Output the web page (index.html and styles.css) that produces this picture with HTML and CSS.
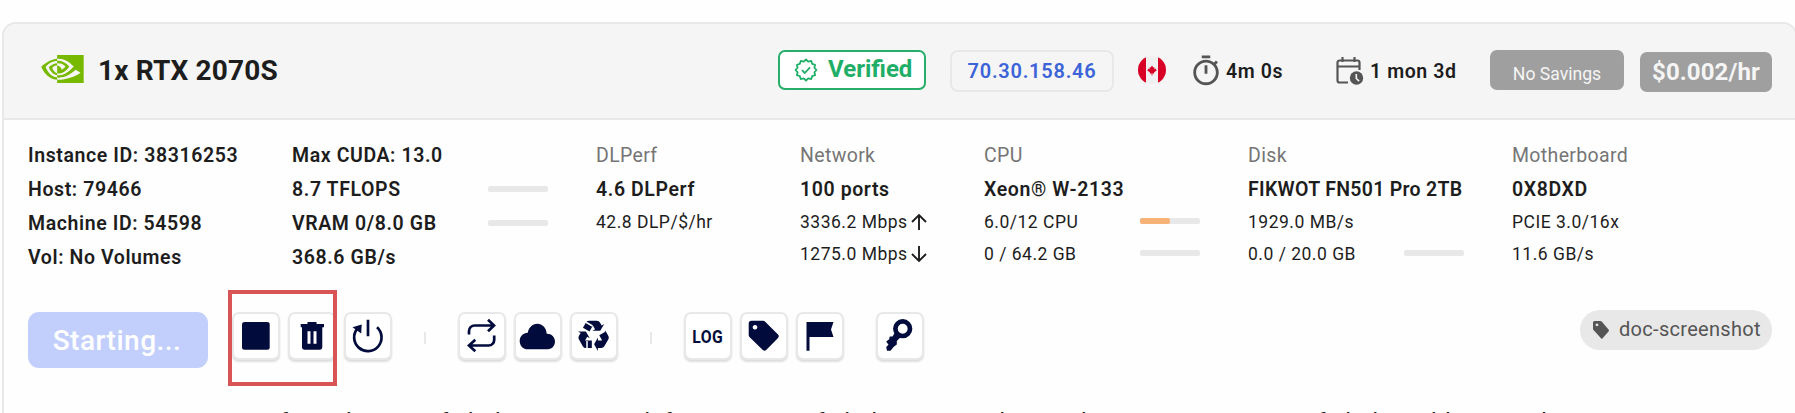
FILE: index.html
```html
<!DOCTYPE html>
<html lang="en">
<head>
  <meta charset="UTF-8">
  <meta name="viewport" content="width=device-width, initial-scale=1.0">
  <title>Instances</title>
  <link rel="stylesheet" href="styles.css">
</head>
<body>
<section class="card">
  <header class="card-head">
    <svg class="nvidia" viewBox="0 4.06 24 15.87"><path d="M8.948 8.798v-1.43a6.7 6.7 0 0 1 .424-.018c3.922-.124 6.493 3.374 6.493 3.374s-2.774 3.851-5.75 3.851c-.398 0-.787-.062-1.158-.185v-4.346c1.528.185 1.837.857 2.747 2.385l2.04-1.714s-1.492-1.952-4-1.952a6.016 6.016 0 0 0-.796.035m0-4.735v2.138l.424-.027c5.45-.185 9.01 4.47 9.01 4.47s-4.08 4.964-8.33 4.964c-.37 0-.733-.035-1.095-.097v1.325c.3.035.61.062.91.062 3.957 0 6.82-2.023 9.593-4.408.459.371 2.34 1.263 2.73 1.652-2.633 2.208-8.772 3.984-12.253 3.984-.335 0-.653-.018-.971-.053v1.864H24V4.063zm0 10.326v1.131c-3.657-.654-4.673-4.46-4.673-4.46s1.758-1.944 4.673-2.262v1.237H8.94c-1.528-.186-2.73 1.245-2.73 1.245s.68 2.412 2.739 3.11M2.456 10.9s2.164-3.197 6.5-3.533V6.201C4.153 6.59 0 10.653 0 10.653s2.35 6.802 8.948 7.42v-1.237c-4.84-.6-6.492-5.936-6.492-5.936z"/></svg>
    <h1 class="title">1x RTX 2070S</h1>
    <div class="verified">
      <svg viewBox="0 0 24 24"><path d="M22.5 12L20.4 14.25L21.1 17.25L18.15 18.15L17.25 21.1L14.25 20.4L12 22.5L9.75 20.4L6.75 21.1L5.85 18.15L2.9 17.25L3.6 14.25L1.5 12L3.6 9.75L2.9 6.75L5.85 5.85L6.75 2.9L9.75 3.6L12 1.5L14.25 3.6L17.25 2.9L18.15 5.85L21.1 6.75L20.4 9.75Z"/><path d="M8 12.2l2.8 2.8 5.2-5.6"/></svg>
      <span>Verified</span>
    </div>
    <a class="ip">70.30.158.46</a>
    <svg class="flag" viewBox="0 0 28 28">
      <clipPath id="round"><circle cx="14" cy="14" r="14"/></clipPath>
      <g clip-path="url(#round)">
        <path fill="#f0f0f0" d="M0 0h28v28H0z"/>
        <path fill="#d80027" d="M0 0h8v28H0zM20 0h8v28h-8z"/>
        <path fill="#d80027" d="M14 9.6l1.3 2 1.3-.4-.4 2 1.9-.7 0 1.3.8.5-2.9 2.3.2 1h-1.8v1.9h-.8v-1.9h-1.8l.2-1-2.9-2.3.8-.5 0-1.3 1.9.7-.4-2 1.3.4z"/>
      </g>
    </svg>
    <div class="stat uptime">
      <svg class="timer" viewBox="0 0 24 24"><path d="M15 1H9v2h6V1zm-4 13h2V8h-2v6zm8.03-6.61 1.42-1.42c-.43-.51-.9-.99-1.41-1.41l-1.42 1.42C16.07 4.74 14.12 4 12 4c-4.97 0-9 4.03-9 9s4.02 9 9 9 9-4.03 9-9c0-2.12-.74-4.07-1.97-5.61zM12 20c-3.87 0-7-3.13-7-7s3.13-7 7-7 7 3.13 7 7-3.13 7-7 7z"/></svg>
      <span>4m 0s</span>
    </div>
    <div class="stat remaining">
      <svg class="calendar" viewBox="0 0 28 28">
        <path class="line" d="M12 25.5H3.5a2 2 0 0 1-2-2V5.500a2 2 0 0 1 2-2h18a2 2 0 0 1 2 2V13M1.500 9.500h22M6.500 0v5M18.500 0v5"/>
        <circle cx="20.500" cy="21" r="6.700"/>
        <path class="hand" d="M20.300 17v4.500l2.800 2.600"/>
      </svg>
      <span>1 mon 3d</span>
    </div>
    <div class="savings">No Savings</div>
    <div class="price">$0.002/hr</div>
  </header>

  <div class="specs">
    <div class="col main">
      <p>Instance ID: 38316253</p>
      <p>Host: 79466</p>
      <p>Machine ID: 54598</p>
      <p>Vol: No Volumes</p>
    </div>
    <div class="col main gpu">
      <p>Max CUDA: 13.0</p>
      <p>8.7 TFLOPS <span class="bar"></span></p>
      <p>VRAM 0/8.0 GB <span class="bar"></span></p>
      <p>368.6 GB/s</p>
    </div>
    <div class="col">
      <p class="label">DLPerf</p>
      <p class="name">4.6 DLPerf</p>
      <p class="small">42.8 DLP/$/hr</p>
    </div>
    <div class="col">
      <p class="label">Network</p>
      <p class="name">100 ports</p>
      <p class="small">3336.2 Mbps <svg class="arrow" viewBox="0 0 18 18"><path d="M9 17V2M2 9l7-7 7 7"/></svg></p>
      <p class="small">1275.0 Mbps <svg class="arrow" viewBox="0 0 18 18"><path d="M9 1v15M2 9l7 7 7-7"/></svg></p>
    </div>
    <div class="col cpu">
      <p class="label">CPU</p>
      <p class="name">Xeon® W-2133</p>
      <p class="small">6.0/12 CPU <span class="bar"><span class="fill" style="width:50%"></span></span></p>
      <p class="small">0 / 64.2 GB <span class="bar"></span></p>
    </div>
    <div class="col disk">
      <p class="label">Disk</p>
      <p class="name">FIKWOT FN501 Pro 2TB</p>
      <p class="small">1929.0 MB/s</p>
      <p class="small">0.0 / 20.0 GB <span class="bar"></span></p>
    </div>
    <div class="col">
      <p class="label">Motherboard</p>
      <p class="name">0X8DXD</p>
      <p class="small">PCIE 3.0/16x</p>
      <p class="small">11.6 GB/s</p>
    </div>
  </div>

  <div class="actions">
    <button class="start">Starting...</button>
    <div class="group power">
      <button class="icon"><svg viewBox="2 2 44 44"><rect x="10" y="10" width="27.700" height="27.700" rx="2.500"/></svg></button>
      <button class="icon"><svg viewBox="2 2 44 44"><path fill-rule="evenodd" d="M19.500 10h9v2H36v3.300h-1.700V35a2.700 2.700 0 0 1-2.700 2.700H16.700A2.700 2.700 0 0 1 14 35V15.300h-1.300V12h6.800zM19.500 19.300v12.500h3V19.300zM25.500 19.300v12.500h3V19.300z"/></svg></button>
      <button class="icon"><svg viewBox="2 2 44 44"><path class="stroke" d="M33 15.200A13.700 13.700 0 1 1 13.600 16.300M24 7.700v16.600"/><path d="M8.500 15.300l9.200-2.800-.5 9z"/></svg></button>
      <span class="highlight"></span>
    </div>
    <span class="divider"></span>
    <div class="group">
      <button class="icon"><svg viewBox="2 2 44 44"><path class="stroke" d="M11 22.500V19a5.500 5.500 0 0 1 5.500-5.500H36M30 7.800l6 5.700-6 5.800M36.200 23.500V28a5.500 5.500 0 0 1-5.500 5.500H11M17.300 27.800l-6.300 5.700 6.300 5.800"/></svg></button>
      <button class="icon"><svg viewBox="2 2 44 44"><path transform="translate(5.700 5.300) scale(1.470 1.600)" d="M18.400 10.300C18.200 6.600 15.400 4 12 4 8.600 4 6 6.600 5.500 9.700 2.300 9.900 0 12 0 14.800 0 17.700 2.300 20 5.500 20h13.700c2.700 0 4.800-2.100 4.800-4.800 0-2.800-2.400-5-5.600-4.900z"/></svg></button>
      <button class="icon"><svg class="recycle" viewBox="2 2 44 44"><path transform="translate(5.100 4.100) scale(1.520)" d="M21.820 15.420L19.320 19.750C18.830 20.610 17.920 21.060 17 21H15V23L12.500 18.500L15 14V16H17.820L15.600 12.150L19.930 9.650L21.730 12.770C22.250 13.540 22.320 14.570 21.820 15.420M9.210 3.060H14.210C15.190 3.060 16.040 3.630 16.450 4.450L17.450 6.190L19.180 5.190L16.540 9.600L11.390 9.690L13.120 8.690L11.710 6.240L9.500 10.090L5.160 7.590L6.960 4.470C7.370 3.640 8.220 3.060 9.210 3.060M5.050 19.760L2.550 15.430C2.060 14.580 2.130 13.560 2.640 12.790L3.640 11.060L1.910 10.060L7.050 10.140L9.700 14.560L7.970 13.560L6.560 16H11V21H7.400C6.470 21.070 5.550 20.610 5.050 19.760Z"/><path class="cut" d="M15.500 10l7 4M35 19l-7 4M17 29v8"/></svg></button>
    </div>
    <span class="divider"></span>
    <div class="group">
      <button class="icon log"><span>LOG</span></button>
      <button class="icon"><svg viewBox="2 2 44 44"><path fill-rule="evenodd" d="M11.500 8.700H23a3 3 0 0 1 2.200 1L38 22.600a2.500 2.500 0 0 1 0 3.400L26.200 38a2.500 2.500 0 0 1-3.400 0L9.700 25.200a3 3 0 0 1-1-2.200V11.500a2.800 2.800 0 0 1 2.800-2.800zM15 13a2.300 2.300 0 1 0 .01 0z"/></svg></button>
      <button class="icon"><svg viewBox="2 2 44 44"><path d="M10.500 10h27l-2.500 7.500 2.500 7.500H13.500v13.700h-3z"/></svg></button>
    </div>
    <div class="group">
      <button class="icon"><svg viewBox="2 2 44 44"><circle class="ring" cx="26.700" cy="16.700" r="7.300"/><path d="M19.300 20l4.700 5.800-3.200 3.200v3.500l-3 2.200-3.300 4h-3.500l-.8-3.700 2.300-2.300-2.300-3.200 3-2.300.5-2.700h2.800z"/></svg></button>
    </div>
    <div class="tag">
      <svg viewBox="0 0 18 18"><path fill-rule="evenodd" d="M1.500 0h5.800a2 2 0 0 1 1.400.6L15.500 8.500a1.500 1.500 0 0 1 0 2L9.600 17.300a1 1 0 0 1-1.600 0L.5 9A2 2 0 0 1 0 7.600V1.500A1.500 1.500 0 0 1 1.500 0zM4 2.500a1.400 1.400 0 1 0 .01 0z"/></svg>
      <span>doc-screenshot</span>
    </div>
  </div>

  <p class="status">Error response from daemon: failed to create task for container: failed to create shim task: OCI runtime create failed: unable to read container</p>
</section>
</body>
</html>
```
FILE: styles.css
```css
* {
  box-sizing: border-box;
  margin: 0;
  padding: 0;
}
body {
  background: #fefefe;
  font-family: Roboto, sans-serif;
  color: #1d1d1d;
  padding: 22px 0 0 2px;
  height: 413px;
  overflow: hidden;
}
svg {
  display: block;
  flex: none;
}
.card {
  width: 1795px;
  height: 460px;
  border: 2px solid #e8e8e8;
  border-radius: 14px;
  overflow: hidden;
}

/* header */
.card-head {
  display: flex;
  align-items: flex-start;
  height: 96px;
  padding: 26px 23px 0 38px;
  background: #f5f5f5;
  border-bottom: 2px solid #e8e8e8;
}
.nvidia {
  width: 43px;
  height: 28px;
  margin: 5px 0 0 -1px;
  fill: #77b900;
}
.title {
  margin: 4px auto 0 14px;
  font-size: 28px;
  line-height: 34px;
  font-weight: 700;
  letter-spacing: .15px;
}
.verified {
  display: flex;
  align-items: center;
  width: 148px;
  height: 40px;
  padding-left: 14px;
  border: 2px solid #27ae6b;
  border-radius: 7px;
  background: #fff;
  color: #1fae67;
  font-size: 24px;
  line-height: 34px;
  font-weight: 700;
}
.verified span {
  margin-top: -2px;
}
.verified svg {
  width: 24px;
  height: 24px;
  margin-right: 10px;
  fill: none;
  stroke: #1fae67;
  stroke-width: 1.8;
  stroke-linejoin: round;
}
.ip {
  width: 164px;
  height: 42px;
  margin-left: 24px;
  border: 2px solid #e8e8e8;
  border-radius: 8px;
  color: #3c64d8;
  font-size: 20px;
  line-height: 39px;
  font-weight: 600;
  letter-spacing: .75px;
  text-align: center;
}
.flag {
  width: 28px;
  height: 28px;
  margin: 6px 0 0 24px;
}
.stat {
  display: flex;
  font-size: 19.5px;
  line-height: 43px;
  font-weight: 600;
  letter-spacing: .6px;
  white-space: nowrap;
}
.uptime {
  width: 147px;
  margin-left: 23px;
}
.timer {
  width: 34px;
  height: 34px;
  margin: 4px 3px 0 0;
  fill: #555;
}
.remaining {
  width: 154px;
}
.calendar {
  width: 28px;
  height: 28px;
  margin: 7px 6px 0 0;
  fill: #555;
}
.calendar .line {
  fill: none;
  stroke: #555;
  stroke-width: 2.2;
}
.calendar .hand {
  fill: none;
  stroke: #f5f5f5;
  stroke-width: 1.6;
}
.savings,
.price {
  height: 40px;
  border-radius: 7px;
  background: #9f9f9f;
  color: #f5f5f5;
  text-align: center;
}
.savings {
  width: 134px;
  font-size: 17.6px;
  line-height: 48px;
}
.price {
  width: 132px;
  margin: 2px 0 0 16px;
  font-size: 24px;
  line-height: 40px;
  font-weight: 700;
  letter-spacing: .1px;
}

/* spec columns */
.specs {
  display: grid;
  grid-template-columns: 264px 304px 204px 184px 264px 264px 1fr;
  height: 192px;
  padding: 18px 0 0 24px;
}
.col p {
  display: flex;
  align-items: center;
  height: 34px;
  font-size: 19.5px;
  white-space: nowrap;
}
.main p,
.col .name {
  font-weight: 600;
  letter-spacing: .6px;
}
.col .label {
  color: #757575;
  letter-spacing: .35px;
}
.col .small {
  height: 32px;
  font-size: 17.5px;
  letter-spacing: .5px;
}
.bar {
  width: 60px;
  height: 6px;
  margin-left: auto;
  border-radius: 2px;
  background: #e8e8e8;
}
.small .bar {
  margin-bottom: 2px;
}
.gpu {
  width: 256px;
}
.cpu {
  width: 216px;
}
.disk {
  width: 216px;
}
.col.disk .name {
  letter-spacing: .3px;
}
.fill {
  display: block;
  height: 6px;
  border-radius: 2px;
  background: #f6b277;
}
.arrow {
  width: 18px;
  height: 18px;
  margin-left: 2px;
  fill: none;
  stroke: #1d1d1d;
  stroke-width: 1.9;
}

/* actions */
.actions {
  display: flex;
  align-items: flex-start;
  height: 98px;
  padding: 0 23px 0 24px;
}
button {
  border: 0;
  font-family: inherit;
}
.start {
  width: 180px;
  height: 56px;
  margin-right: 24px;
  padding-right: 2px;
  border-radius: 11px;
  background: #c2cffd;
  color: #fff;
  font-size: 28px;
  font-weight: 500;
  letter-spacing: .5px;
}
.group {
  display: flex;
  gap: 8px;
}
.icon {
  width: 48px;
  height: 48px;
  border: 2px solid #e8e8e8;
  border-radius: 7px;
  background: #fff;
  box-shadow: 0 2px 2px #ddd;
}
.icon svg {
  width: 44px;
  height: 44px;
  fill: #020c3c;
}
.icon .stroke {
  fill: none;
  stroke: #020c3c;
  stroke-width: 2.7;
}
.icon .ring {
  fill: none;
  stroke: #020c3c;
  stroke-width: 4.7;
}
.recycle .cut {
  stroke: #fff;
  stroke-width: 1.5;
}
.log span {
  display: inline-block;
  color: #020c3c;
  font-size: 19px;
  font-weight: 700;
  letter-spacing: .6px;
  transform: scaleX(.83);
  margin: 0 -4px;
}
.power {
  position: relative;
}
/* frame over the stop and delete buttons */
.highlight {
  position: absolute;
  left: -4px;
  top: -22px;
  width: 109px;
  height: 96px;
  border: 4px solid #d95555;
}
.divider {
  width: 2px;
  height: 12px;
  margin: 20px 32px 0;
  background: #e8e8e8;
}
.group + .group {
  margin-left: 32px;
}
.tag {
  display: flex;
  width: 192px;
  height: 40px;
  margin: -2px 0 0 auto;
  padding-left: 13px;
  border-radius: 20px;
  background: #e8e8e8;
  color: #555;
  font-size: 20px;
  line-height: 39px;
  letter-spacing: .3px;
}
.tag svg {
  width: 18px;
  height: 18px;
  margin: 11px 8px 0 0;
  fill: #555;
}
.status {
  padding-left: 109px;
  font-size: 24px;
  line-height: 24px;
  letter-spacing: .31px;
  white-space: nowrap;
}
```
